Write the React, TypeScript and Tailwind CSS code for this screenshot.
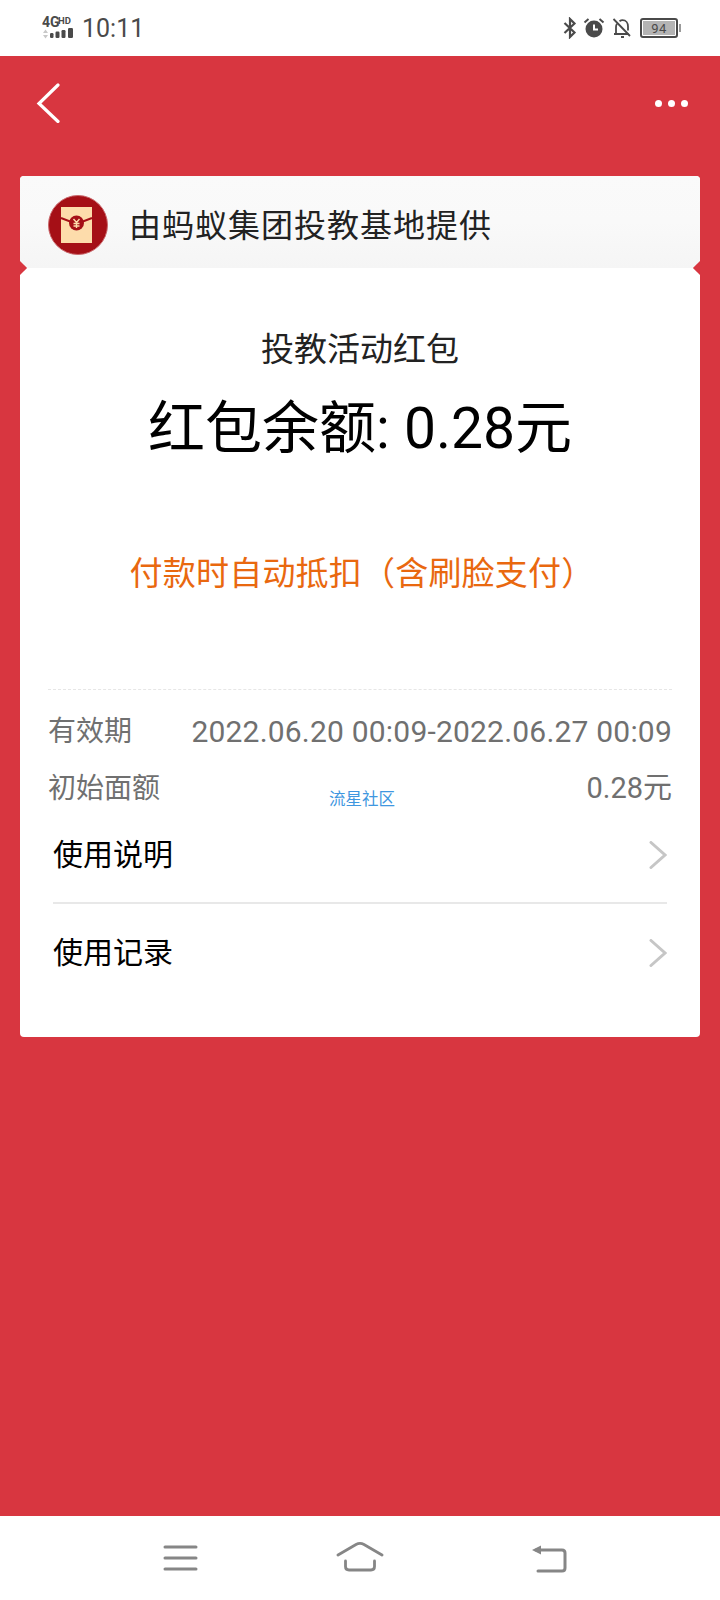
const FONT = "font-['Roboto','Noto_Sans_CJK_SC',sans-serif]";

function StatusBar() {
  return (
    <div className="h-14 bg-white flex items-center justify-between pl-[42px] pr-[39px] text-[#4a4a4a]">
      <div className="flex items-center gap-2">
        <svg width="32" height="26" viewBox="0 0 32 26">
          <text x="0" y="12" fontSize="14" fontWeight="700" fill="#4a4a4a" fontFamily="Roboto">4G</text>
          <text x="16" y="9" fontSize="9.500" fontWeight="700" fill="#4a4a4a" fontFamily="Roboto">HD</text>
          <path d="M1 18l2.500-3.500L6 18zM1 20l2.500 3.500L6 20z" fill="#c8c8c8" />
          <rect x="8" y="18" width="3.500" height="5" rx="1.200" fill="#4a4a4a" />
          <rect x="13.500" y="16.500" width="4" height="6.500" rx="1.200" fill="#4a4a4a" />
          <rect x="19.500" y="15" width="4" height="8" rx="1.200" fill="#4a4a4a" />
          <rect x="26" y="13" width="5" height="10" rx="1.200" fill="#4a4a4a" />
        </svg>
        <span className="text-[25px] leading-none">10:11</span>
      </div>
      <div className="flex items-center">
        <svg width="14" height="22" viewBox="0 0 14 22" fill="none" stroke="#4a4a4a" strokeWidth="2.200">
          <path d="M1.500 6l10 9.500L7 20V2l4.500 4.500L1.500 16" />
        </svg>
        <svg width="22" height="22" viewBox="0 0 22 22" className="ml-[6px]">
          <circle cx="11" cy="12" r="8.500" fill="#4a4a4a" />
          <path d="M11 7.500V12.500H15" fill="none" stroke="#fff" strokeWidth="2" />
          <path d="M1.500 5.500L5.500 2M20.500 5.500L16.500 2" stroke="#4a4a4a" strokeWidth="2" fill="none" />
        </svg>
        <svg width="20" height="22" viewBox="0 0 20 22" fill="none" stroke="#4a4a4a" strokeWidth="1.800" className="ml-[7px]">
          <path d="M2 17h14.500M4 17v-7c0-1.200.3-2.400 1-3.300M7.500 4.200C8.500 3.500 9.500 3.200 10.500 3.200c3.500 0 5.500 3 5.500 6.300v4" />
          <path d="M9 20h3M1.500 2L18 19" />
        </svg>
        <div className="ml-2 w-[38px] h-[20px] border-2 border-[#4a4a4a] rounded-[3px] p-px">
          <div className="h-full w-full bg-[#b4b4b4] flex items-center justify-center text-[13px] leading-none tracking-[0.5px]">94</div>
        </div>
        <div className="w-[2px] h-2 bg-[#9a9a9a] ml-[1px]" />
      </div>
    </div>
  );
}

function TopBar() {
  return (
    <div className="h-[120px] flex items-start justify-between pl-9 pr-[32px] pt-[27px]">
      <svg width="24" height="40" viewBox="0 0 24 40" fill="none" stroke="#fff" strokeWidth="3.200" strokeLinecap="round">
        <path d="M22 2L3 20.500 22 38.500" />
      </svg>
      <div className="flex gap-[6px] mt-[17px]">
        <span className="w-[7px] h-[7px] rounded-full bg-white" />
        <span className="w-[7px] h-[7px] rounded-full bg-white" />
        <span className="w-[7px] h-[7px] rounded-full bg-white" />
      </div>
    </div>
  );
}

function EnvelopeLogo() {
  return (
    <svg width="60" height="60" viewBox="0 0 60 60" className="-mt-px">
      <circle cx="30" cy="30" r="29.500" fill="#a50f16" stroke="#c9686c" strokeWidth="1" />
      <rect x="13" y="12" width="31" height="36" fill="#fddcab" />
      <path d="M13 23l15.500 6L44 23" fill="none" stroke="#a50f16" strokeWidth="2" />
      <circle cx="28.500" cy="28" r="7.500" fill="#a50f16" />
      <path d="M25.500 24l3 3.500 3-3.500M28.500 27.500V33M25.500 28.500h6M25.500 31h6" fill="none" stroke="#fddcab" strokeWidth="1.400" />
    </svg>
  );
}

function InfoRow({ label, value, valueClass, children }: { label: string; value: string; valueClass: string; children?: React.ReactNode }) {
  return (
    <div className="relative h-[57px] flex items-center justify-between px-[28px] text-[#707070]">
      <span className="text-[28px] leading-none">{label}</span>
      <span className={`${valueClass} leading-none`}>{value}</span>
      {children}
    </div>
  );
}

function RowChevron() {
  return (
    <svg width="18" height="28" viewBox="0 0 18 28" fill="none" stroke="#c6c6c6" strokeWidth="3" strokeLinecap="round">
      <path d="M2 1.500L16 14 2 26.500" />
    </svg>
  );
}

function LinkRow({ label, className }: { label: string; className: string }) {
  return (
    <div className={`${className} flex items-center justify-between text-black`}>
      <span className="text-[30px] leading-none">{label}</span>
      <RowChevron />
    </div>
  );
}

export default function App() {
  return (
    <div className={`w-[720px] h-[1600px] flex flex-col bg-[#d83640] ${FONT}`}>
      <StatusBar />
      <div className="flex-1 flex flex-col">
        <TopBar />
        <div className="mx-5 h-[861px] flex flex-col rounded-[4px] overflow-hidden bg-white relative">
          <div className="h-[92px] shrink-0 flex items-center gap-[21px] pl-[28px] pt-[6px] bg-gradient-to-b from-[#fafafa] via-[#f9f9f9] to-[#f5f5f5]">
            <EnvelopeLogo />
            <span className="mt-[2px] text-[32px] leading-none text-[#222] tracking-[1px]">由蚂蚁集团投教基地提供</span>
          </div>
          <span className="absolute left-[-5px] top-[87px] w-[10px] h-[10px] rotate-45 bg-[#d83640]" />
          <span className="absolute right-[-5px] top-[87px] w-[10px] h-[10px] rotate-45 bg-[#d83640]" />

          <div className="flex flex-col items-center pt-[65px]">
            <div className="text-[33px] leading-none text-[#222]">投教活动红包</div>
            <div className="mt-[34px] text-[57px] leading-none text-black">红包余额: 0.28元</div>
            <div className="mt-[100px] ml-1 text-[33px] leading-none text-[#e9680f] tracking-[0.2px]">付款时自动抵扣（含刷脸支付）</div>
          </div>

          <div className="mx-[28px] mt-[99px] border-t border-dashed border-[#e6e6e6]" />
          <div className="mt-[13px]">
            <InfoRow label="有效期" value="2022.06.20 00:09-2022.06.27 00:09" valueClass="text-[30px] tracking-[0.2px]" />
            <InfoRow label="初始面额" value="0.28元" valueClass="text-[29px]">
              <span className="absolute left-[309px] top-[32px] text-[16.5px] leading-none text-[#3f97e0]">流星社区</span>
            </InfoRow>
          </div>
          <div className="mx-[33px]">
            <LinkRow label="使用说明" className="h-[76px] mb-[9px]" />
            <div className="border-t-2 border-[#e8e8e8]" />
            <LinkRow label="使用记录" className="h-[97px]" />
          </div>
        </div>
        <div className="flex-1" />
      </div>
      <div className="h-[84px] bg-white flex items-start pl-[162px] pt-[28px]">
        <svg width="36" height="28" viewBox="0 0 36 28" fill="none" stroke="#868686" strokeWidth="3" strokeLinecap="round">
          <path d="M3 3h31M3 14h31M3 25h31" />
        </svg>
        <svg width="48" height="34" viewBox="0 0 48 34" fill="none" stroke="#868686" strokeWidth="2.800" strokeLinecap="round" className="ml-[138px] mt-[-3px]">
          <path d="M2 14L20 3.500c2.500-1.300 5.500-1.300 8 0L46 14" />
          <path d="M9.500 20v5.500c0 2.500 1 3.500 3.500 3.500h22c2.500 0 3.500-1 3.500-3.500V20" />
        </svg>
        <svg width="36" height="30" viewBox="0 0 36 30" fill="none" stroke="#868686" strokeWidth="3" strokeLinecap="round" className="ml-[147px]">
          <path d="M5 6h26c2 0 3 1 3 3v15c0 2-1 3-3 3H7" />
          <path d="M1 6L10 1.500v9z" fill="#868686" stroke="none" />
        </svg>
      </div>
    </div>
  );
}
